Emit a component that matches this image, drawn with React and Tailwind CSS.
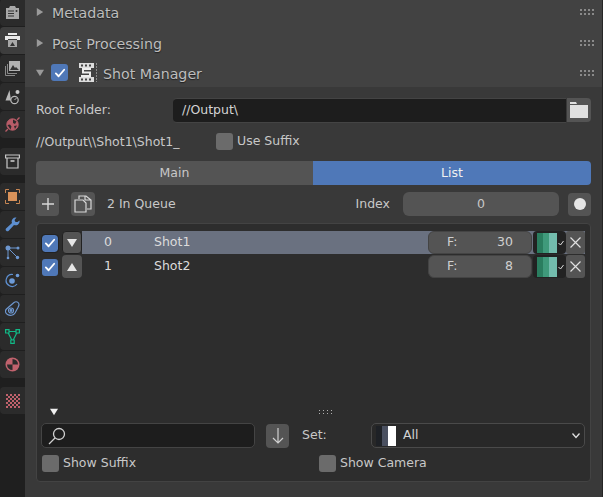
import React from 'react';

const GripDots = ({ size = 2, gapX = 2, color = '#8a8a8a' }) => (
    <div className="grid grid-cols-4 gap-y-[2px]" style={{ columnGap: gapX }}>
        {[...Array(8)].map((_, i) => (
            <div key={i} style={{ width: size, height: size, background: color }} />
        ))}
    </div>
);

const Check = ({ on, className = '' }) => (
    <div className={`w-[17px] h-[17px] rounded-[3px] shrink-0 flex items-center justify-center ${on ? 'bg-[#4f78b8]' : 'bg-[#6b6b6b]'} ${className}`}>
        {on && (
            <svg width="12" height="12" viewBox="0 0 13 13" fill="none" stroke="#fff" strokeWidth="2" strokeLinecap="round" strokeLinejoin="round">
                <path d="M2 7l3 3 6-7" />
            </svg>
        )}
    </div>
);

const Tri = ({ dir = 'right', color = '#9c9c9c', w = 8 }) => {
    const d = dir === 'right' ? 'M1 0L9 5L1 10Z' : dir === 'down' ? 'M0 1L10 1L5 9Z' : 'M0 9L10 9L5 1Z';
    return <svg width={w} height={w} viewBox="0 0 10 10"><path d={d} fill={color} /></svg>;
};

const Header = ({ title, h, mb = 0 }) => (
    <div className="flex items-center pl-[11px] pr-[8px]" style={{ height: h, marginBottom: mb }}>
        <div className="w-[16px] flex justify-start">
            <Tri color="#9a9a9a" />
        </div>
        <span className="text-[14.200px] text-[#bdbdbd] [text-shadow:0_1px_1px_#0008] translate-y-[2px]">{title}</span>
        <div className="ml-auto"><GripDots /></div>
    </div>
);

const SideTab = ({ active, children, mt = 0 }) => (
    <div
        className={`h-[27px] w-[25px] flex items-center justify-center rounded-l-[4px] ${active ? 'bg-[#3d3d3d]' : 'bg-[#2b2b2b]'}`}
        style={{ marginTop: mt }}
    >
        {children}
    </div>
);

const Sidebar = () => (
    <div className="w-[25px] shrink-0 bg-[#1f1f1f] flex flex-col gap-px h-full overflow-hidden">
        <SideTab mt={-1}>
            <svg width="15" height="15" viewBox="0 0 15 15">
                <path d="M1 3h3l1-2h5l1 2h3v11H1z" fill="#a8a8a8" />
                <path d="M3 6h6M3 8.500h6M3 11h6" stroke="#333" strokeWidth="1.200" />
                <circle cx="11.500" cy="6" r="1" fill="#333" />
            </svg>
        </SideTab>
        <SideTab active>
            <svg width="15" height="15" viewBox="0 0 15 15">
                <path d="M3 0h9v2H3zM0 3h15v4H12V6H3v1H0z" fill="#e8e8e8" />
                <path d="M3 7h9v7H3z" fill="#a8a8a8" />
                <path d="M5 13l2.500-4 2.500 4z" fill="#333" />
            </svg>
        </SideTab>
        <SideTab>
            <svg width="15" height="15" viewBox="0 0 15 15" fill="none">
                <path d="M0.500 5v9.500H10M2.500 3v9.500H12" stroke="#8a8a8a" />
                <path d="M4 0h11v10H4z" fill="#b0b0b0" />
                <path d="M5 9l3-5 2 3 1-1 3 3z" fill="#333" />
            </svg>
        </SideTab>
        <SideTab>
            <svg width="15" height="16" viewBox="0 0 15 16" fill="none">
                <path d="M4.500 1L0.500 11.500h5.500z" fill="#b8b8b8" />
                <circle cx="12.500" cy="3" r="2" fill="#c8c8c8" />
                <circle cx="9.500" cy="11" r="3.700" stroke="#b8b8b8" strokeWidth="1.200" />
                <path d="M9.500 11l2-2" stroke="#b8b8b8" />
            </svg>
        </SideTab>
        <SideTab>
            <svg width="15" height="15" viewBox="0 0 15 15" fill="none">
                <circle cx="7.500" cy="7.500" r="5.700" fill="#b85c68" stroke="#b85c68" />
                <path d="M8 2.500l3.500 2-1.500 2.500-2-1zM2.500 8l2.500-.5 1.500 2-1 3zM9 9l3-.5-2 3.500z" fill="#2f2a2b" />
                <path d="M0.500 14.500l2.500-2.500M12 3l2.500-2.500" stroke="#b85c68" strokeWidth="1.400" />
            </svg>
        </SideTab>
        <SideTab mt={9}>
            <svg width="15" height="15" viewBox="0 0 15 15" fill="none" stroke="#c8c8c8" strokeWidth="1.200">
                <path d="M0.600 1h13.800v3H0.600zM2 4v10h11V4" />
                <path d="M5.500 7h4" strokeWidth="1.600" />
            </svg>
        </SideTab>
        <SideTab mt={7}>
            <svg width="15" height="15" viewBox="0 0 15 15" fill="none">
                <path d="M3 3h9v9H3z" fill="#d8925a" />
                <path d="M0.500 4V0.500H4M11 0.500h3.500V4M14.500 11v3.500H11M4 14.500H0.500V11" stroke="#c58552" />
            </svg>
        </SideTab>
        <SideTab>
            <svg width="15" height="15" viewBox="0 0 15 15">
                <path d="M14.500 3.500a4 4 0 0 1-5.500 4.500L3.500 14a1.800 1.800 0 0 1-2.500-2.500L7 6A4 4 0 0 1 11.500 0.500L9.500 3l1 2 2 0z" fill="#5d8fd0" />
            </svg>
        </SideTab>
        <SideTab>
            <svg width="15" height="15" viewBox="0 0 15 15" stroke="#6d97cf" fill="#6d97cf">
                <path d="M3 3h10M3 3l9 9M3 3v9" strokeWidth="1" />
                <circle cx="3" cy="3" r="2.500" stroke="none" />
                <circle cx="13" cy="3" r="1.500" stroke="none" />
                <circle cx="12.500" cy="12.500" r="1.700" stroke="none" />
                <circle cx="3" cy="13" r="1.300" stroke="none" />
            </svg>
        </SideTab>
        <SideTab>
            <svg width="15" height="15" viewBox="0 0 15 15" fill="none">
                <path d="M12 11a6 6 0 1 1-4-9.500" stroke="#5d8fd0" strokeWidth="1.200" />
                <circle cx="7" cy="8" r="2.800" fill="#6d9bd8" />
                <circle cx="12.500" cy="2.500" r="1.800" fill="#6d9bd8" />
            </svg>
        </SideTab>
        <SideTab>
            <svg width="15" height="15" viewBox="0 0 15 15" fill="none" stroke="#6d97cf" strokeWidth="1.200">
                <path d="M1.500 8L9 1.500c2-1.500 5-.5 5 2 0 1-.5 2-1 3l-3 5.500c-1.500 2.500-5 3-7.500 1.500S0 9.500 1.500 8z" />
                <circle cx="6" cy="9.500" r="2.500" />
                <circle cx="6" cy="9.500" r="0.800" fill="#6d97cf" />
            </svg>
        </SideTab>
        <SideTab>
            <svg width="15" height="15" viewBox="0 0 15 15" fill="none" stroke="#12b886" strokeWidth="1.200">
                <path d="M2.500 2.500h10L7.500 12.500z" />
                <path d="M0.600 0.600h3.400v3.400H0.600zM11 0.600h3.400v3.400H11zM5.800 11h3.400v3.400H5.800z" fill="#2b2b2b" />
            </svg>
        </SideTab>
        <SideTab>
            <svg width="15" height="15" viewBox="0 0 15 15">
                <circle cx="7.500" cy="7.500" r="7" fill="#c0626d" />
                <path d="M7.500 2a5.500 5.500 0 0 1 5.500 5.500H7.500zM7.500 7.500V13A5.500 5.500 0 0 1 2 7.500z" fill="#2b2b2b" />
            </svg>
        </SideTab>
        <SideTab mt={8}>
            <svg width="14" height="14" viewBox="0 0 14 14">
                <rect width="14" height="14" fill="#c0626d" />
                <path d="M2 0h2v2H2zM6 0h2v2H6zM10 0h2v2h-2zM0 2h2v2H0zM4 2h2v2H4zM8 2h2v2H8zM12 2h2v2h-2zM2 4h2v2H2zM6 4h2v2H6zM10 4h2v2h-2zM0 6h2v2H0zM4 6h2v2H4zM8 6h2v2H8zM12 6h2v2h-2zM2 8h2v2H2zM6 8h2v2H6zM10 8h2v2h-2zM0 10h2v2H0zM4 10h2v2H4zM8 10h2v2H8zM12 10h2v2h-2zM2 12h2v2H2zM6 12h2v2H6zM10 12h2v2h-2z" fill="#2b2b2b" />
            </svg>
        </SideTab>
    </div>
);

const ShotRow = ({ index, name, frames, active }) => (
    <div className="h-[24px] flex items-stretch">
        <div className="w-[21px] flex items-center justify-start pl-px">
            <div className={`w-[16px] h-[17px] rounded-[3px] bg-[#4f78b8] flex items-center justify-center ${active ? 'outline outline-[#222]' : ''}`}>
                <svg width="12" height="12" viewBox="0 0 13 13" fill="none" stroke="#fff" strokeWidth="2" strokeLinecap="round" strokeLinejoin="round">
                    <path d="M2 7l3 3 6-7" />
                </svg>
            </div>
        </div>
        <div className={`w-[20px] h-[23px] rounded-[4px] bg-[#545454] flex items-center justify-center ${active ? 'border border-[#222]' : ''}`}>
            <Tri dir={active ? 'down' : 'up'} color="#e6e6e6" w={10} />
        </div>
        <div className={`flex-1 flex items-center h-[23px] ${active ? 'bg-[#6a7180]' : ''}`}>
            <span className="ml-[22px] w-[50px] text-[#dcdcdc]">{index}</span>
            <span className="text-[#dcdcdc]">{name}</span>
            <div className="ml-auto w-[104px] h-[23px] rounded-[6px] bg-[#545454] border border-[#444] flex items-center justify-between px-[18px] text-[#d0d0d0]">
                <span>F:</span>
                <span>{frames}</span>
            </div>
            <div className="w-[33px] h-[23px] ml-px bg-[#222] rounded-[4px] flex items-center pl-[4px]">
                <div className="w-[6px] h-[20px] bg-[#2a7d5f]" />
                <div className="w-[6px] h-[20px] bg-[#3f9a7b]" />
                <div className="w-[8px] h-[20px] bg-[#73bcad]" />
                <svg width="6" height="6" viewBox="0 0 6 6" fill="none" stroke="#ddd" className="ml-[1px]"><path d="M0.500 3l2 2 3-4" /></svg>
            </div>
            <div className="w-[19px] h-[23px] bg-[#545454] rounded-[3px] flex items-center justify-center">
                <svg width="11" height="11" viewBox="0 0 11 11" stroke="#e0e0e0" strokeWidth="1.200"><path d="M0.500 0.500l10 10M10.500 0.500l-10 10" /></svg>
            </div>
        </div>
    </div>
);

const ShotManager = () => (
    <div className="bg-[#393939] flex-1 px-[11px] pt-[11px] text-[12.500px] text-[#c8c8c8]">
        <div className="flex items-center h-[24px]">
            <span className="w-[137px]">Root Folder:</span>
            <div className="flex-1 h-[25px] bg-[#1d1d1d] border-y border-[#444] rounded-l-[4px] flex items-center pl-[9px] text-[#d4d4d4]">//Output\</div>
            <div className="w-[24px] h-[24px] ml-px bg-[#545454] rounded-r-[4px] flex items-center justify-center">
                <svg width="18" height="16" viewBox="0 0 18 16">
                    <path d="M0 0h6l1 2H0zM0 3h18v13H0z" fill="#e0e0e0" />
                </svg>
            </div>
        </div>
        <div className="flex items-center h-[19px] mt-[10px]">
            <span className="w-[180px] translate-y-px">//Output\\Shot1\Shot1_</span>
            <Check />
            <span className="ml-[4px]">Use Suffix</span>
        </div>
        <div className="flex h-[24px] mt-[10px]">
            <div className="w-[277px] bg-[#545454] rounded-l-[4px] flex items-center justify-center text-[#c8c8c8]">Main</div>
            <div className="flex-1 bg-[#4f78b8] rounded-r-[4px] flex items-center justify-center text-[#f0f0f0]">List</div>
        </div>
        <div className="flex items-center h-[24px] mt-[7px]">
            <div className="w-[23px] h-[23px] bg-[#545454] rounded-[4px] flex items-center justify-center">
                <svg width="12" height="12" viewBox="0 0 12 12" stroke="#d8d8d8" strokeWidth="1.400"><path d="M6 0v12M0 6h12" /></svg>
            </div>
            <div className="w-[24px] h-[24px] bg-[#545454] rounded-[4px] ml-[12px] flex items-center justify-center">
                <svg width="18" height="18" viewBox="0 0 18 18" fill="none" stroke="#d8d8d8" strokeWidth="1.200">
                    <path d="M5 4V1h7l5 4v9h-4M11 1v4h6" />
                    <path d="M1 5h8l3 3v9H1z" />
                </svg>
            </div>
            <span className="ml-[12px]">2 In Queue</span>
            <span className="ml-auto">Index</span>
            <div className="w-[156px] h-[24px] bg-[#545454] rounded-[6px] ml-[13px] flex items-center justify-center">0</div>
            <div className="w-[23px] h-[23px] bg-[#545454] rounded-[4px] ml-[9px] flex items-center justify-center">
                <div className="w-[12px] h-[12px] rounded-full bg-[#e6e6e6]" />
            </div>
        </div>
        <div className="h-[259px] mt-[7px] bg-[#2d2d2d] border border-[#434343] rounded-[4px] pl-[4px] pr-[5px] pt-[7px] flex flex-col">
            <ShotRow index="0" name="Shot1" frames="30" active />
            <ShotRow index="1" name="Shot2" frames="8" />
            <div className="mt-auto flex items-center h-[12px]">
                <div className="ml-[9px]"><Tri dir="down" color="#f0f0f0" w={8} /></div>
                <div className="ml-[261px]"><GripDots size={1} gapX={3} color="#b0b0b0" /></div>
            </div>
            <div className="flex items-center h-[25px] mt-[5px]">
                <div className="w-[214px] h-[25px] bg-[#1d1d1d] border border-[#444] rounded-[5px] flex items-center pl-[6px]">
                    <svg width="18" height="18" viewBox="0 0 18 18" fill="none" stroke="#d0d0d0" strokeWidth="1.300">
                        <circle cx="11" cy="7" r="5.500" /><path d="M7 11l-6 6" />
                    </svg>
                </div>
                <div className="w-[23px] h-[24px] bg-[#545454] rounded-[4px] ml-[11px] flex items-center justify-center">
                    <svg width="12" height="16" viewBox="0 0 12 16" fill="none" stroke="#d0d0d0" strokeWidth="1.200"><path d="M6 0v15M1 10l5 5 5-5" /></svg>
                </div>
                <span className="ml-[13px] w-[69px]">Set:</span>
                <div className="w-[214px] h-[25px] bg-[#282828] border border-[#4a4a4a] rounded-[5px] flex items-center px-[4px]">
                    <div className="w-[6px] h-[20px] bg-[#1e2126]" />
                    <div className="w-[6px] h-[20px] bg-[#4a5060]" />
                    <div className="w-[8px] h-[20px] bg-white" />
                    <span className="ml-[7px] text-[#d4d4d4]">All</span>
                    <svg width="8" height="6" viewBox="0 0 8 6" fill="none" stroke="#e0e0e0" strokeWidth="1.300" className="ml-auto"><path d="M0.500 0.500L4 4.500L7.500 0.500" /></svg>
                </div>
            </div>
            <div className="flex items-center h-[19px] mt-[6px] mb-[8px] ml-px">
                <Check />
                <span className="ml-[4px] w-[256px]">Show Suffix</span>
                <Check />
                <span className="ml-[4px]">Show Camera</span>
            </div>
        </div>
    </div>
);

export default function App() {
    return (
        <div className="w-[603px] h-[497px] flex overflow-hidden bg-[#1f1f1f] font-['DejaVu_Sans',sans-serif]">
            <Sidebar />
            <div className="flex-1 flex flex-col border-r border-[#262626]">
                <div className="bg-[#424242]">
                    <Header title="Metadata" h={23} mb={4} />
                    <Header title="Post Processing" h={31} />
                    <div className="flex items-center pl-[11px] pr-[8px] h-[29px]">
                        <div className="w-[16px]"><Tri dir="down" color="#9a9a9a" /></div>
                        <Check on className="ml-[-1px]" />
                        <svg width="18" height="19" viewBox="0 0 18 19" className="ml-[11px] mr-[6px]">
                            <path d="M0 0h15v5H0zM0 14h15v5H0z" fill="#dcdcdc" />
                            <path d="M2 1.500h2v2H2zM6 1.500h2v2H6zM10 1.500h2v2h-2zM2 15.500h2v2H2zM6 15.500h2v2H6zM10 15.500h2v2h-2z" fill="#424242" />
                            <path d="M0 5h15v9H0z" fill="#424242" />
                            <path d="M12 6H4v3.500h7V13H2" fill="none" stroke="#ececec" strokeWidth="2" />
                            <path d="M17.500 0v19" stroke="#8a8a8a" strokeDasharray="2 1" />
                        </svg>
                        <span className="text-[14.200px] text-[#bdbdbd] [text-shadow:0_1px_1px_#0008] translate-y-[2px]">Shot Manager</span>
                        <div className="ml-auto"><GripDots /></div>
                    </div>
                </div>
                <ShotManager />
            </div>
        </div>
    );
}
